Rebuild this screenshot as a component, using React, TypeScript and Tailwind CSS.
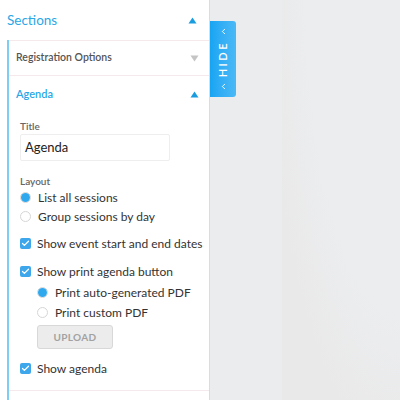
import React from 'react';
import { ChevronLeft, Check } from 'lucide-react';

const Triangle: React.FC<{ up?: boolean; className?: string }> = ({ up, className }) => (
  <svg width="9" height="7" viewBox="0 0 9 7" className={className}>
    {up ? <polygon points="4.5,0.5 8.5,6.5 0.5,6.5" fill="currentColor" /> : <polygon points="0.5,0.5 8.5,0.5 4.5,6.5" fill="currentColor" />}
  </svg>
);

const Radio: React.FC<{ checked?: boolean; label: string }> = ({ checked, label }) => (
  <label className="flex items-center gap-[7px] h-[19px] whitespace-nowrap">
    <span className="w-[11px] h-[11px] rounded-full border border-[#d6d6d6] bg-white flex items-center justify-center shrink-0">
      {checked && <span className="w-[9px] h-[9px] rounded-full bg-[#2fa8ee]" />}
    </span>
    <span className="text-[12px] text-[#333]">{label}</span>
  </label>
);

const Checkbox: React.FC<{ label: string }> = ({ label }) => (
  <label className="flex items-center gap-[6px] h-[19px] whitespace-nowrap">
    <span className="w-[11px] h-[11px] rounded-[2px] bg-[#3ea6ea] flex items-center justify-center shrink-0">
      <Check className="w-[9px] h-[9px] text-white" strokeWidth={3.5} />
    </span>
    <span className="text-[12px] text-[#333]">{label}</span>
  </label>
);

const App: React.FC = () => {
  return (
    <div className="flex w-[400px] h-[400px] bg-[#ebecee] overflow-hidden" style={{ fontFamily: 'Lato, "Open Sans", sans-serif' }}>
      <aside className="w-[210px] h-full bg-white border-r border-[#dcdcdc] flex flex-col shrink-0">
        <div className="h-[40px] flex items-center justify-between pl-[7px] pr-[12px]">
          <span className="text-[13.5px] text-[#2aa7e6]">Sections</span>
          <Triangle up className="text-[#1a9de0]" />
        </div>
        <div className="ml-[7px] border-l-2 border-[#7fcdf3] flex-1 flex flex-col">
          <div className="h-[36px] border-t border-b border-[#f5e9eb] flex items-center justify-between pl-[7px] pr-[10px]">
            <span className="text-[10.5px] font-semibold text-[#555]">Registration Options</span>
            <Triangle className="text-[#c4c4c4]" />
          </div>
          <div className="border-b border-[#f5e9eb] pl-[7px] pr-[10px] pb-[12px]">
            <div className="h-[37px] flex items-center justify-between">
              <span className="text-[11px] font-semibold text-[#2aa7e6]">Agenda</span>
              <Triangle up className="text-[#1a9de0]" />
            </div>
            <div className="pl-[4px]">
              <div className="text-[10px] font-semibold text-[#666] mt-[6px]">Title</div>
              <div className="mt-[0px] w-[150px] h-[27px] border border-[#eeeeee] rounded-[2px] flex items-center px-[4px] text-[13px] text-[#222]">Agenda</div>
              <div className="text-[10px] font-semibold text-[#666] mt-[13px]">Layout</div>
              <div className="mt-[-1px] flex flex-col">
                <Radio checked label="List all sessions" />
                <Radio label="Group sessions by day" />
              </div>
              <div className="mt-[8px]">
                <Checkbox label="Show event start and end dates" />
              </div>
              <div className="mt-[9px]">
                <Checkbox label="Show print agenda button" />
              </div>
              <div className="pl-[17px] mt-[2px] flex flex-col">
                <Radio checked label="Print auto-generated PDF" />
                <div className="mt-[1px]">
                  <Radio label="Print custom PDF" />
                </div>
                <button className="mt-[3px] w-[76px] h-[24px] bg-[#ececec] border border-[#d8d8d8] rounded-[3px] text-[10px] font-bold text-[#a2a2a2] tracking-[0.3px]">UPLOAD</button>
              </div>
              <div className="mt-[10px]">
                <Checkbox label="Show agenda" />
              </div>
            </div>
          </div>
        </div>
      </aside>
      <div className="w-[72px] shrink-0 pt-[21px]">
        <div className="w-[26px] h-[76px] rounded-r-[3px] bg-gradient-to-r from-[#15a5f3] to-[#4ab9f6] flex flex-col items-center justify-between py-[6px] text-white">
          <ChevronLeft className="w-[9px] h-[9px]" strokeWidth={2.5} />
          <span className="text-[11px] font-semibold tracking-[2.5px] [writing-mode:vertical-rl] rotate-180">HIDE</span>
          <ChevronLeft className="w-[9px] h-[9px]" strokeWidth={2.5} />
        </div>
      </div>
      <div className="flex-1 bg-[radial-gradient(ellipse_at_top_right,#ecedef_55%,#e9e9e9_80%)]" />
    </div>
  );
};

export default App;
